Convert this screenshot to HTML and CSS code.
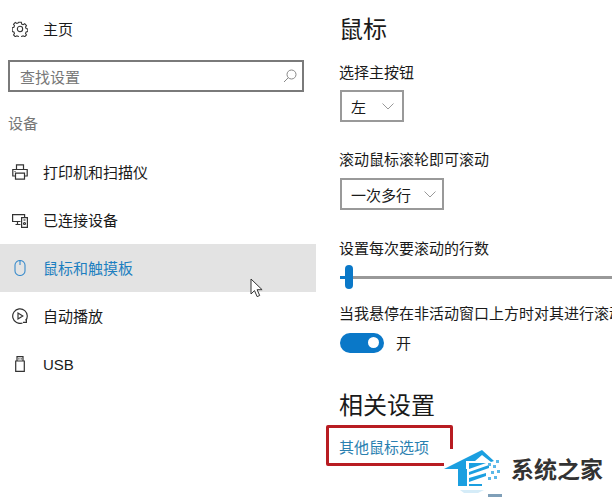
FILE: index.html
```html
<!DOCTYPE html>
<html>
<head>
    <title>鼠标和触摸板</title>
    <link rel="stylesheet" href="styles.css">
</head>
<body>
    <div class="page">
        <!-- Left nav -->
        <nav class="nav">
            <div class="nav-item">
                <svg class="icon" width="16" height="16" viewBox="0 0 18 18" fill="none" stroke="#333" stroke-width="1.2">
                    <circle cx="9" cy="9" r="3"/>
                    <path d="M7.5 1.5h3l.4 2 1.6.7 1.8-1.1 2 2.1-1.1 1.7.7 1.6 1.9.5v2.9l-1.9.5-.7 1.6 1.1 1.7-2 2-1.8-1-1.6.7-.4 1.9h-3l-.4-1.9-1.6-.7-1.8 1-2-2 1.1-1.7-.7-1.6-1.9-.5V7.5l1.9-.5.7-1.6-1.1-1.7 2-2.1 1.8 1.1 1.6-.7z"/>
                </svg>
                <span>主页</span>
            </div>
            <div class="search">
                <span>查找设置</span>
                <svg width="14" height="14" viewBox="0 0 14 14" fill="none" stroke="#888" stroke-width="1">
                    <circle cx="8.5" cy="5.5" r="4.5"/>
                    <path d="M5.3 8.7 1 13"/>
                </svg>
            </div>
            <div class="group-title">设备</div>
            <div class="nav-item">
                <svg class="icon" width="16" height="16" viewBox="0 0 16 16" fill="none" stroke="#333" stroke-width="1.2">
                    <path d="M4.5 5.5V.8h7v4.7M3.5 12H.8V5.5h14.4V12h-2.7"/>
                    <path d="M3.5 9.2h9v6h-9zM2.5 7.5h1"/>
                </svg>
                <span>打印机和扫描仪</span>
            </div>
            <div class="nav-item">
                <svg class="icon" width="16" height="16" viewBox="0 0 16 16" fill="none" stroke="#333" stroke-width="1.2">
                    <path d="M8.5 9.5H.6V2.6h12V5M3.5 12.5h5M5.5 9.5v3"/>
                    <path d="M9.6 5.6h5.8v9.8H9.6z"/>
                    <circle cx="12.5" cy="11.5" r="1"/>
                    <path d="M11.5 8h2"/>
                </svg>
                <span>已连接设备</span>
            </div>
            <div class="nav-item active">
                <svg class="icon" width="16" height="16" viewBox="0 0 16 16" fill="none" stroke="#3a8ccc" stroke-width="1.1">
                    <path d="M3 5a5 4.5 0 0 1 10 0v6a5 4.5 0 0 1-10 0zM8 .5V5"/>
                </svg>
                <span>鼠标和触摸板</span>
            </div>
            <div class="nav-item">
                <svg class="icon" width="16" height="16" viewBox="0 0 16 16" fill="none" stroke="#333" stroke-width="1.2">
                    <path d="M10.5 15A7.3 7.3 0 1 1 15.3 8a7 7 0 0 1-1.6 4.5"/>
                    <path d="M6 5v6l4.8-3zM14.4 11v3.4H11"/>
                </svg>
                <span>自动播放</span>
            </div>
            <div class="nav-item">
                <svg class="icon" width="16" height="16" viewBox="0 0 16 16" fill="none" stroke="#333" stroke-width="1.2">
                    <path d="M5 5V.6h6V5M3.7 5h8.6v10.4H3.7z"/>
                    <path d="M6.3 2.8h1.2M8.6 2.8h1.2"/>
                </svg>
                <span class="usb">USB</span>
            </div>
        </nav>

        <!-- Right panel -->
        <main class="panel">
            <h1>鼠标</h1>
            <div class="label label-first">选择主按钮</div>
            <div class="select select-left">
                <span>左</span>
                <svg width="12" height="7" viewBox="0 0 12 7" fill="none" stroke="#999"><path d="M.5.5 6 6l5.5-5.5"/></svg>
            </div>
            <div class="label label-scroll">滚动鼠标滚轮即可滚动</div>
            <div class="select">
                <span>一次多行</span>
                <svg width="12" height="7" viewBox="0 0 12 7" fill="none" stroke="#999"><path d="M.5.5 6 6l5.5-5.5"/></svg>
            </div>
            <div class="label label-lines">设置每次要滚动的行数</div>
            <div class="slider">
                <div class="slider-fill"></div>
                <div class="slider-thumb"></div>
                <div class="slider-track"></div>
            </div>
            <div class="label label-hover">当我悬停在非活动窗口上方时对其进行滚动</div>
            <div class="toggle-row">
                <div class="toggle"><div class="toggle-dot"></div></div>
                <span>开</span>
            </div>
            <h2>相关设置</h2>
            <a class="link">其他鼠标选项</a>
        </main>
    </div>

    <!-- Things pasted over the screenshot -->
    <svg class="cursor" width="14" height="20" viewBox="0 0 14 20">
        <path d="M1 1v15l3.5-3.4 2.6 6 2.6-1.1-2.6-5.8h5z" fill="#fff" stroke="#333"/>
    </svg>
    <div class="redbox"></div>
    <div class="watermark">
        <svg class="logo" width="64" height="48" viewBox="0 0 64 48">
            <path d="M0 20 38 1l12 11-3 1-9-7-7 6h-9v8z" fill="#1b9fe0"/>
            <path d="M14 20h9v17h-9zM25 14h17l-17 6zM25 23l20-7v3l-20 7zM25 29l17-5v3l-17 6zM25 35h13v2H25z" fill="#1b9fe0"/>
            <path d="M44 14h3v3h-3zM49 16h3v3h-3zM52 11h3v3h-3zM47 22h3v3h-3zM53 21h3v3h-3zM44 28h3v3h-3zM50 27h3v3h-3z" fill="#5bb8e8"/>
            <path d="M16 41h24l-6 3H20z" fill="#d5ecf8"/>
            <path d="M44 45h14v3H44z" fill="#7f9fb8"/>
        </svg>
        <span>系统之家</span>
    </div>
</body>
</html>
```

FILE: styles.css
```css
* {
    box-sizing: border-box;
}
html, body {
    margin: 0;
    height: 100%;
    overflow: hidden;
}
body {
    position: relative;
    background: #fff;
    color: #1a1a1a;
    font-family: "Liberation Sans", "Noto Sans CJK SC", sans-serif;
    font-size: 15px;
}
.page {
    display: flex;
    height: 497px;
}
.nav {
    width: 316px;
    padding-top: 5px;
    flex-shrink: 0;
}
.nav-item {
    display: flex;
    align-items: center;
    gap: 15px;
    height: 48px;
    padding-left: 12px;
}
.nav-item span {
    margin-bottom: 2px;
}
.nav-item.active {
    background: #e3e3e3;
    color: #1d7fc0;
}
.nav-item .usb {
    margin-bottom: 0;
}
.search {
    display: flex;
    align-items: center;
    justify-content: space-between;
    width: 296px;
    height: 32px;
    margin: 7px 0 0 8px;
    padding: 0 5px 0 10px;
    border: 2px solid #7a7a7a;
    color: #777;
}
.group-title {
    margin: 22px 0 14px 8px;
    color: #777;
    line-height: 20px;
}
.panel {
    flex: 1;
    min-width: 0;
    padding: 12px 0 0 24px;
    white-space: nowrap;
    overflow: hidden;
}
h1, h2 {
    margin: 0 0 0 -1px;
    font-weight: normal;
    font-size: 24px;
    line-height: 36px;
}
.label {
    margin-left: -1px;
    line-height: 20px;
}
.label-first { margin-top: 15px; }
.label-scroll { margin-top: 28px; }
.label-lines { margin-top: 29px; }
.label-hover { margin-top: 15px; }
.select {
    display: inline-flex;
    align-items: center;
    gap: 13px;
    height: 32px;
    margin-top: 8px;
    padding: 0 6px 0 9px;
    border: 2px solid #999;
}
.select-left {
    display: flex;
    gap: 16px;
    width: 64px;
    margin-top: 7px;
}
.slider {
    display: flex;
    align-items: center;
    height: 24px;
    margin-top: 6px;
}
.slider-fill {
    width: 5px;
    height: 3px;
    background: #0a78c8;
}
.slider-thumb {
    width: 8px;
    height: 24px;
    border-radius: 4px;
    background: #0a78c8;
}
.slider-track {
    flex: 1;
    height: 3px;
    background: #999;
}
.toggle-row {
    display: flex;
    align-items: center;
    gap: 12px;
    margin-top: 8px;
}
.toggle {
    display: flex;
    align-items: center;
    justify-content: flex-end;
    width: 44px;
    height: 20px;
    padding-right: 5px;
    border-radius: 10px;
    background: #0a78c8;
}
.toggle-dot {
    width: 11px;
    height: 11px;
    border-radius: 50%;
    background: #fff;
}
h2 {
    margin-top: 35px;
}
.link {
    display: block;
    margin: 14px 0 0 -1px;
    color: #2a80b0;
    line-height: 20px;
}
/* overlays */
.cursor {
    position: absolute;
    left: 250px;
    top: 278px;
}
.redbox {
    position: absolute;
    left: 326px;
    top: 425px;
    width: 127px;
    height: 41px;
    border: 3px solid #b81c22;
    border-radius: 2px;
}
.watermark {
    position: absolute;
    left: 444px;
    top: 449px;
    display: flex;
    gap: 3px;
    width: 168px;
    height: 48px;
    background: #fff;
    font-size: 23px;
    font-weight: bold;
    line-height: 42px;
    color: #333;
}
.logo {
    flex-shrink: 0;
}
```
